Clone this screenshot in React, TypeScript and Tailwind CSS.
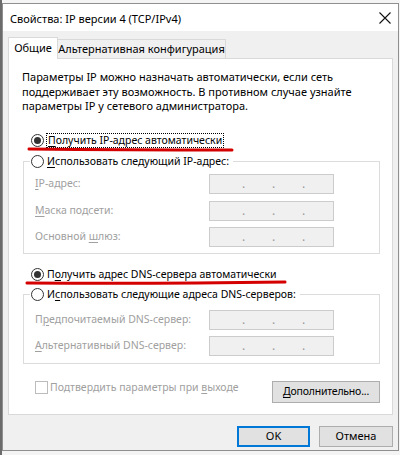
import React from 'react';

const Radio: React.FC<{ checked?: boolean }> = ({ checked }) => (
  <span className="w-[13px] h-[13px] rounded-full border border-[#333333] bg-white flex items-center justify-center shrink-0">
    {checked && <span className="w-[7px] h-[7px] rounded-full bg-[#333333]" />}
  </span>
);

const IpField: React.FC = () => (
  <div className="w-[125px] h-[20px] border border-[#cccccc] bg-[#f0f0f0] flex items-center pl-[32px] gap-[28px] text-[#9a9a9a] text-[12px] leading-none">
    <span className="w-[2px]">.</span>
    <span className="w-[2px]">.</span>
    <span className="w-[2px]">.</span>
  </div>
);

const FieldRow: React.FC<{ label: React.ReactNode; className?: string }> = ({ label, className }) => (
  <div className={`flex items-center h-[20px] pl-[11px] ${className ?? ''}`}>
    <span className="w-[174px] text-[#a0a0a0] whitespace-nowrap">{label}</span>
    <IpField />
  </div>
);

const u = 'underline underline-offset-[2px] decoration-1';

const App: React.FC = () => {
  return (
    <div className="relative w-[400px] h-[455px] overflow-hidden bg-[#f4f4f4] border-l-2 border-[#6b6b6b] font-['Noto_Sans',sans-serif] text-[10.5px] text-black whitespace-nowrap">
      <div className="mt-[3px] w-[397px] h-[448px] border border-[#8f8f8f] flex flex-col bg-[#f0f0f0]">
        {/* Title bar */}
        <div className="h-[27px] bg-white flex items-center justify-between pl-[7px] pr-[6px]">
          <span className="text-[11px] leading-none pt-[2px]">Свойства: IP версии 4 (TCP/IPv4)</span>
          <svg width="12" height="12" viewBox="0 0 12 12" className="mt-[1px] mr-[1px]">
            <path d="M0.5 0.5 L11.5 11.5 M11.5 0.5 L0.5 11.5" stroke="#111" strokeWidth="1.1" fill="none" />
          </svg>
        </div>

        {/* Body */}
        <div className="flex-1 px-[5px] pt-[6px]">
          {/* Tabs */}
          <div className="flex items-end h-[21px] text-[11px]">
            <div className="relative z-10 -mb-px h-[22px] w-[50px] bg-white border border-b-0 border-[#d9d9d9] flex items-center justify-center pb-[1px]">
              Общие
            </div>
            <div className="h-[19px] w-[169px] -ml-px bg-[#f0f0f0] border border-b-0 border-[#d9d9d9] flex items-center justify-center">
              Альтернативная конфигурация
            </div>
          </div>

          {/* Panel */}
          <div className="h-[357px] bg-white border border-[#d9d9d9] pl-[14px] pr-[12px] pt-[11px]">
            <p className="leading-[14.5px] -ml-px text-[11px]">
              Параметры IP можно назначать автоматически, если сеть
              <br />
              поддерживает эту возможность. В противном случае узнайте
              <br />
              параметры IP у сетевого администратора.
            </p>

            <div className="mt-[19px] h-[16px] flex items-center pl-[8px] gap-[2px]">
              <Radio checked />
              <span className="border border-dotted border-black px-[1px] leading-[13px]">
                <span className={u}>П</span>олучить IP-адрес автоматически
              </span>
            </div>

            {/* Group 1 */}
            <div className="mt-[12px] border border-[#dcdcdc] pb-[6px]">
              <div className="-mt-[8px] ml-[6px] w-fit h-[16px] bg-white px-[1px] pr-[4px] flex items-center gap-[3px]">
                <Radio />
                <span>
                  <span className={u}>И</span>спользовать следующий IP-адрес:
                </span>
              </div>
              <FieldRow className="mt-[4px]" label={<><span className={u}>I</span>P-адрес:</>} />
              <FieldRow className="mt-[7px]" label={<><span className={u}>М</span>аска подсети:</>} />
              <FieldRow className="mt-[6px]" label={<>Основной <span className={u}>ш</span>люз:</>} />
            </div>

            <div className="mt-[13px] h-[16px] flex items-center pl-[8px] gap-[3px]">
              <Radio checked />
              <span>
                П<span className={u}>о</span>лучить адрес DNS-сервера автоматически
              </span>
            </div>

            {/* Group 2 */}
            <div className="mt-[11px] border border-[#dcdcdc] pb-[7px]">
              <div className="-mt-[8px] ml-[6px] w-fit h-[16px] bg-white px-[1px] pr-[4px] flex items-center gap-[3px]">
                <Radio />
                <span>
                  И<span className={u}>с</span>пользовать следующие адреса DNS-серверов:
                </span>
              </div>
              <FieldRow className="mt-[7px]" label={<>П<span className={u}>р</span>едпочитаемый DNS-сервер:</>} />
              <FieldRow className="mt-[6px]" label={<><span className={u}>А</span>льтернативный DNS-сервер:</>} />
            </div>

            <div className="mt-[16px] flex justify-between items-start">
              <div className="flex items-center gap-[2px] pl-[12px] h-[14px] mt-[1px]">
                <span className="w-[13px] h-[13px] border border-[#bcbcbc] bg-white" />
                <span className="text-[#a0a0a0]">
                  Подтвердить параметры при <span className={u}>в</span>ыходе
                </span>
              </div>
              <button
                type="button"
                className="mt-[1px] w-[108px] h-[22px] bg-[#e1e1e1] border border-[#adadad] flex items-center justify-center"
              >
                <span className="tracking-[-0.2px]">
                  <span className={u}>Д</span>ополнительно...
                </span>
              </button>
            </div>
          </div>

          {/* Dialog buttons */}
          <div className="mt-[11px] flex justify-end gap-[9px] text-[11px]">
            <button type="button" className="w-[73px] h-[21px] bg-[#e1e1e1] border-2 border-[#0078d7] flex items-center justify-center">
              OK
            </button>
            <button type="button" className="w-[74px] h-[21px] bg-[#e1e1e1] border border-[#adadad] flex items-center justify-center">
              Отмена
            </button>
          </div>
        </div>
      </div>

      {/* red annotation strokes */}
      <svg className="absolute inset-0 pointer-events-none" width="400" height="455" viewBox="0 0 400 455">
        <path d="M27 149 Q120 150 230 150" stroke="#d40000" strokeWidth="3" strokeLinecap="round" fill="none" />
        <path d="M25 283 Q150 284 283 282" stroke="#d40000" strokeWidth="3" strokeLinecap="round" fill="none" />
      </svg>
    </div>
  );
};

export default App;
